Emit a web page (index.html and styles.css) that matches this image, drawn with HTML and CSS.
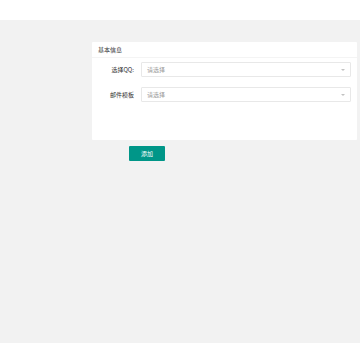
FILE: index.html
```html
<!DOCTYPE html>
<html>
<head>
<meta charset="utf-8">
<link rel="stylesheet" href="styles.css">
</head>
<body>
<div class="top"></div>
<main class="main">
  <section class="card">
    <div class="card-head">基本信息</div>
    <div class="card-body">
      <div class="row">
        <label class="label">选择QQ:</label>
        <div class="select"><span>请选择</span><i class="arrow"></i></div>
      </div>
      <div class="row">
        <label class="label">邮件模板</label>
        <div class="select"><span>请选择</span><i class="arrow"></i></div>
      </div>
    </div>
  </section>
  <div class="actions"><button class="btn">添加</button></div>
</main>
</body>
</html>
```
FILE: styles.css
```css
* { box-sizing: border-box; }
html, body { margin: 0; padding: 0; background: #fff; }
body { font-family: "Noto Sans CJK SC", "Noto Sans", sans-serif; color: #333; width: 360px; height: 360px; overflow: hidden; }
.top { height: 20px; background: #fff; }
.main { background: #f2f2f2; height: 323px; padding: 22px 3px 0 92px; }
.card { background: #fff; height: 98px; border-radius: 1px; }
.card-head { height: 16px; line-height: 16px; padding-left: 6px; font-size: 6px; color: #333; border-bottom: 1px solid #f4f4f4; }
.card-body { padding-top: 4px; }
.row { display: flex; align-items: center; height: 15px; margin-bottom: 10px; }
.label { width: 48px; padding-right: 6px; text-align: right; font-size: 6px; color: #333; }
.select { flex: none; width: 210px; height: 15px; border: 1px solid #e8e8e8; border-radius: 1px; display: flex; align-items: center; justify-content: space-between; padding: 0 5px 0 5px; font-size: 6px; color: #999; margin-left: 1px; }
.arrow { width: 0; height: 0; border-left: 2.5px solid transparent; border-right: 2.5px solid transparent; border-top: 2.5px solid #c2c2c2; }
.actions { display: flex; padding: 6px 0 0 37px; }
.btn { width: 36px; height: 15px; border: 0; border-radius: 1px; background: #009688; color: #fff; font-size: 6px; font-family: inherit; padding: 0; }
```
